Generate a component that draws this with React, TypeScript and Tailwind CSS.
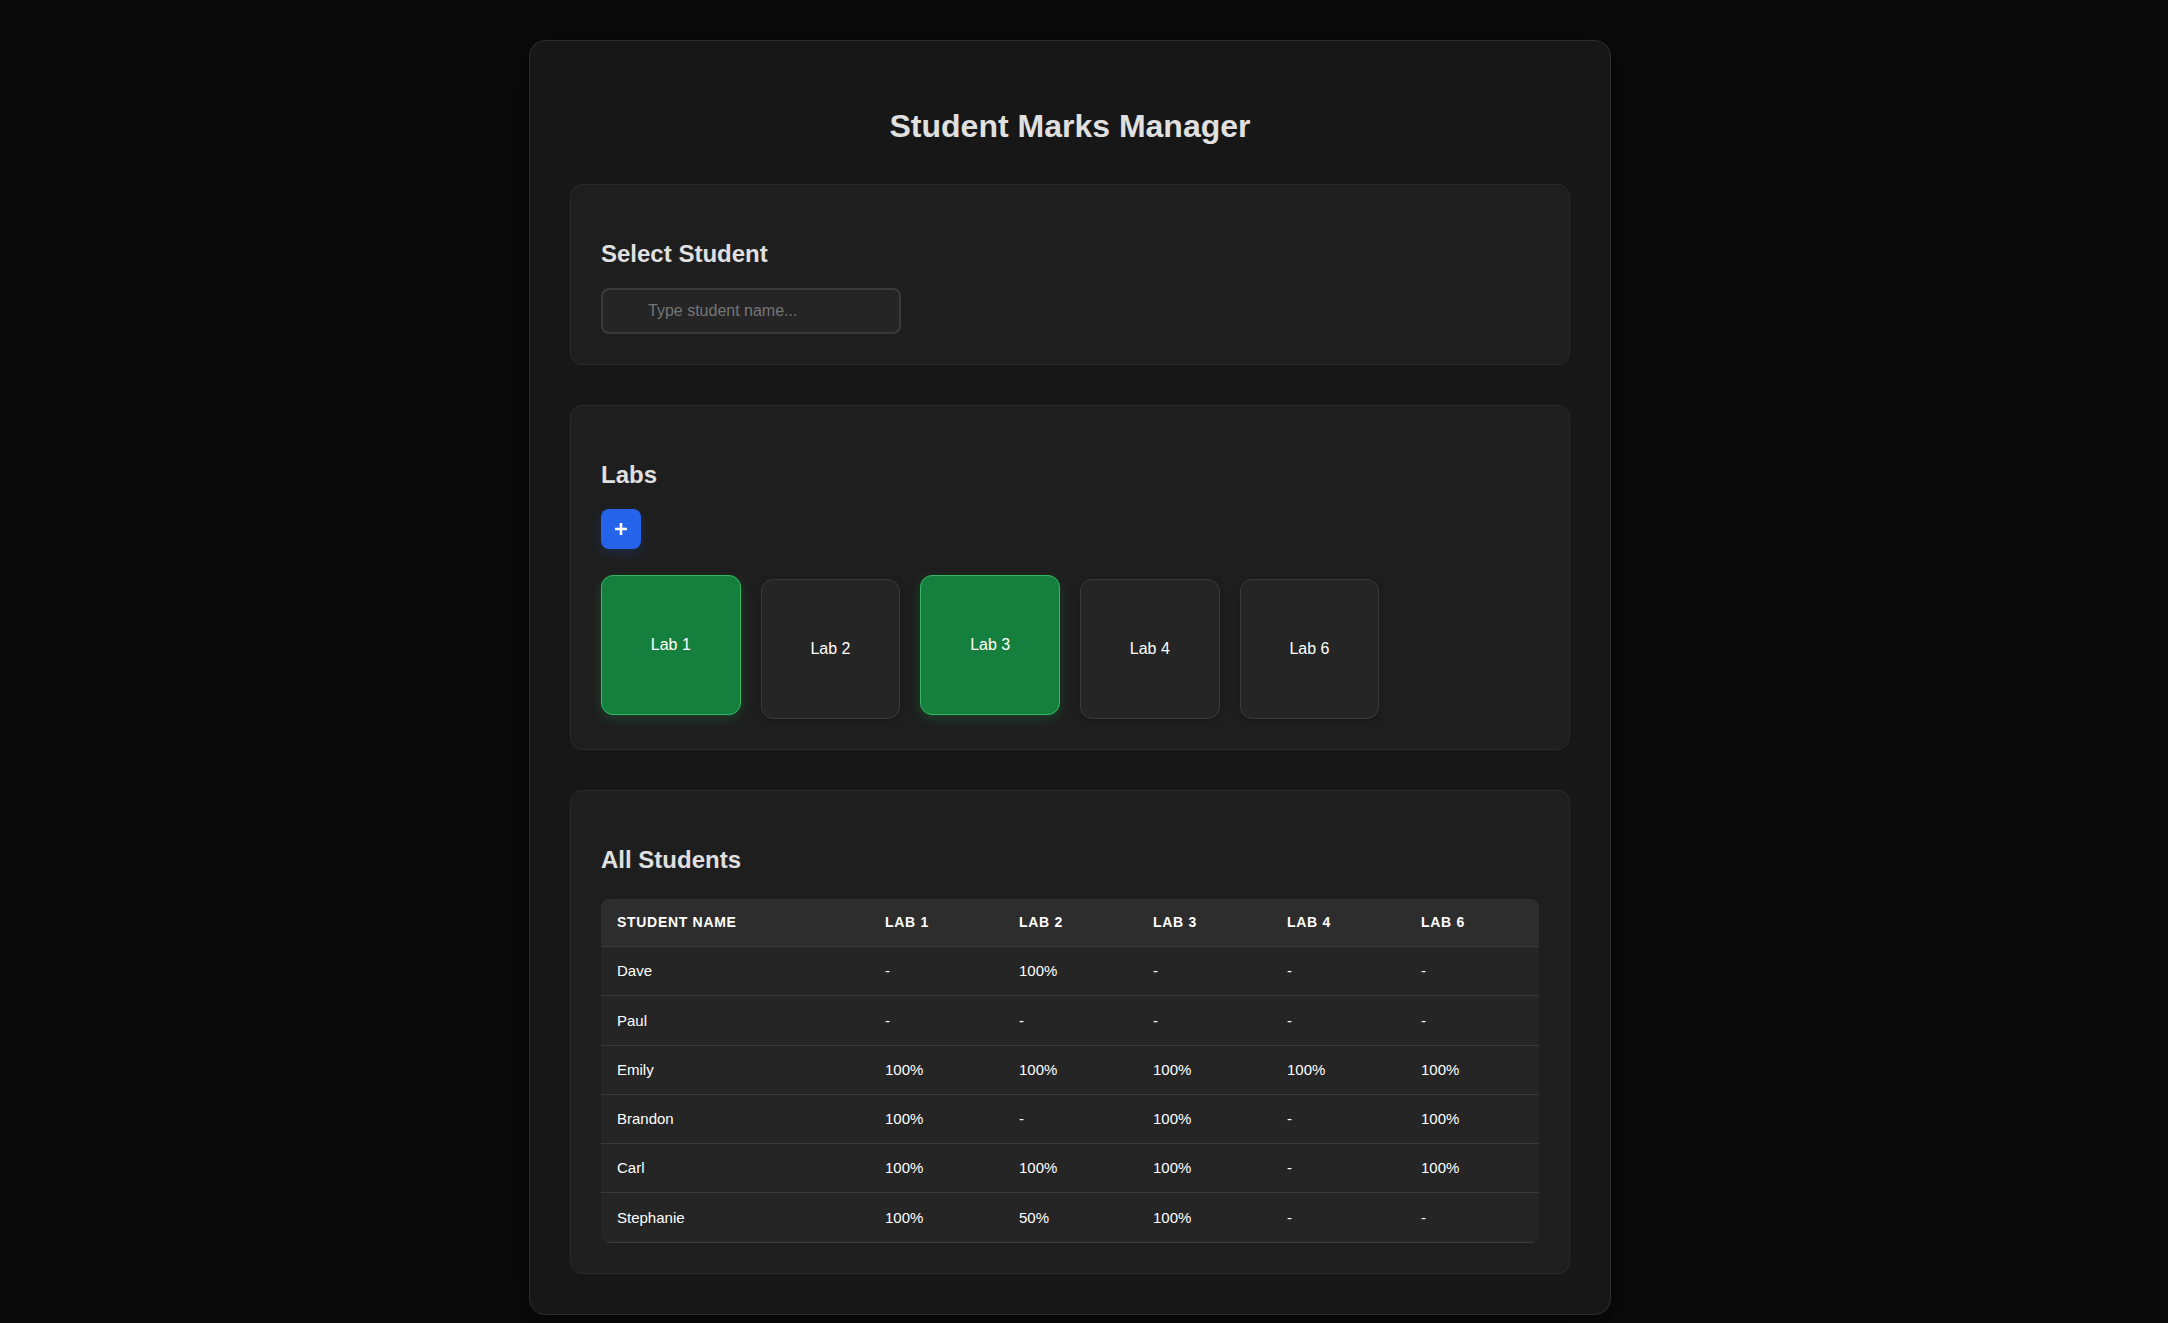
import { useState } from "react";
import type { ReactNode } from "react";

const labs = ["Lab 1", "Lab 2", "Lab 3", "Lab 4", "Lab 6"];

const students = [
  { name: "Dave", marks: ["-", "100%", "-", "-", "-"] },
  { name: "Paul", marks: ["-", "-", "-", "-", "-"] },
  { name: "Emily", marks: ["100%", "100%", "100%", "100%", "100%"] },
  { name: "Brandon", marks: ["100%", "-", "100%", "-", "100%"] },
  { name: "Carl", marks: ["100%", "100%", "100%", "-", "100%"] },
  { name: "Stephanie", marks: ["100%", "50%", "100%", "-", "-"] },
];

function Section({ title, children }: { title: string; children: ReactNode }) {
  return (
    <section className="rounded-xl border border-[#2a2a2a] bg-[#1e1e1e] px-[30px] pt-[50px] pb-[30px]">
      <h2 className="mb-[15px] text-2xl leading-[38px] font-bold text-[#e0e0e0]">{title}</h2>
      {children}
    </section>
  );
}

function LabCard({ name, active, onToggle }: { name: string; active: boolean; onToggle: () => void }) {
  return (
    <button
      type="button"
      aria-pressed={active}
      onClick={onToggle}
      className={
        active
          ? "aspect-square -translate-y-1 rounded-xl border border-[#34b864] bg-[#15803d] text-base text-white shadow-[0_4px_12px_rgba(34,197,94,0.2)]"
          : "aspect-square rounded-xl border border-[#3a3a3a] bg-[#252525] text-base text-white shadow-[0_2px_8px_rgba(0,0,0,0.2)]"
      }
    >
      {name}
    </button>
  );
}

export default function App() {
  const [active, setActive] = useState<string[]>(["Lab 1", "Lab 3"]);
  const toggle = (lab: string) =>
    setActive((list) => (list.includes(lab) ? list.filter((l) => l !== lab) : [...list, lab]));

  return (
    <div className="min-h-screen bg-[#0a0a0a] pt-10 pr-7 pb-2 font-['Liberation_Sans',Arial,sans-serif] text-white">
      <main className="mx-auto w-full max-w-[1082px] rounded-2xl border border-[#2d2d2d] bg-[#171717] p-10 shadow-[0_8px_32px_rgba(0,0,0,0.4)]">
        <h1 className="mt-5 mb-8 text-center text-[32px] leading-[51px] font-bold text-[#e0e0e0]">
          Student Marks Manager
        </h1>
        <div className="flex flex-col gap-10">
          <Section title="Select Student">
            <input
              type="text"
              aria-label="Student name"
              placeholder="Type student name..."
              className="block h-[46px] w-full max-w-[300px] rounded-lg border-2 border-[#3a3a3a] bg-[#252525] px-[45px] text-base text-white outline-none placeholder:text-[#757575]"
            />
          </Section>

          <Section title="Labs">
            <button
              type="button"
              aria-label="Add lab"
              className="mb-[30px] flex size-10 items-center justify-center rounded-lg bg-[#2563eb] text-white shadow-[0_4px_12px_rgba(37,99,235,0.2)]"
            >
              <svg viewBox="0 0 12 12" className="size-3" fill="none" stroke="currentColor" strokeWidth="2.6" aria-hidden="true">
                <path d="M6 0v12M0 6h12" />
              </svg>
            </button>
            <div className="grid grid-cols-[repeat(auto-fill,minmax(130px,1fr))] gap-5">
              {labs.map((lab) => (
                <LabCard key={lab} name={lab} active={active.includes(lab)} onToggle={() => toggle(lab)} />
              ))}
            </div>
          </Section>

          <Section title="All Students">
            <div className="mt-5 overflow-hidden rounded-lg bg-[#252525]">
              <table className="h-[344px] w-full table-fixed border-collapse text-left">
                <thead>
                  <tr className="h-12 border-b border-[#3a3a3a] bg-[#2d2d2d] text-sm tracking-wider uppercase">
                    <th scope="col" className="w-2/7 px-4 font-bold">Student Name</th>
                    {labs.map((lab) => (
                      <th key={lab} scope="col" className="px-4 font-bold">{lab}</th>
                    ))}
                  </tr>
                </thead>
                <tbody>
                  {students.map((s) => (
                    <tr key={s.name} className="border-b border-[#3a3a3a] text-[15px] leading-6">
                      <td className="px-4">{s.name}</td>
                      {s.marks.map((mark, i) => (
                        <td key={labs[i]} className="px-4">{mark}</td>
                      ))}
                    </tr>
                  ))}
                </tbody>
              </table>
            </div>
          </Section>
        </div>
      </main>
    </div>
  );
}
